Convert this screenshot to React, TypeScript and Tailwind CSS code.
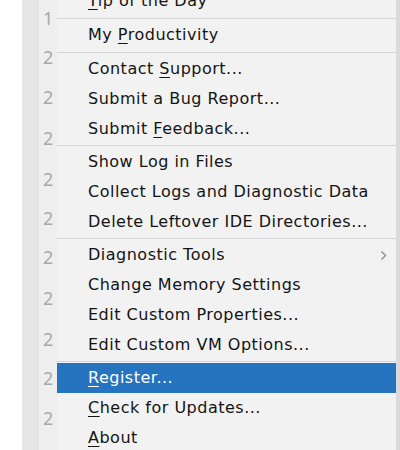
import React from "react";

type Item = { label: string; u?: number; sub?: boolean; active?: boolean; h: number };
type Entry = Item | "sep";

const entries: Entry[] = [
  { label: "Tip of the Day", u: 0, h: 30 },
  "sep",
  { label: "My Productivity", u: 3, h: 30 },
  "sep",
  { label: "Contact Support...", u: 8, h: 30 },
  { label: "Submit a Bug Report...", h: 30 },
  { label: "Submit Feedback...", u: 7, h: 29 },
  "sep",
  { label: "Show Log in Files", h: 30 },
  { label: "Collect Logs and Diagnostic Data", h: 30 },
  { label: "Delete Leftover IDE Directories...", h: 29 },
  "sep",
  { label: "Diagnostic Tools", sub: true, h: 30 },
  { label: "Change Memory Settings", h: 30 },
  { label: "Edit Custom Properties...", h: 30 },
  { label: "Edit Custom VM Options...", h: 29 },
  "sep",
  { label: "Register...", u: 0, active: true, h: 30 },
  { label: "Check for Updates...", u: 0, h: 30 },
  { label: "About", u: 0, h: 30 },
];

const gutter: { n: string; h: number }[] = [
  { n: "1", h: 39 },
  { n: "2", h: 40 },
  { n: "2", h: 40 },
  { n: "2", h: 42 },
  { n: "2", h: 39 },
  { n: "2", h: 39 },
  { n: "2", h: 40 },
  { n: "2", h: 42 },
  { n: "2", h: 39 },
  { n: "2", h: 40 },
  { n: "2", h: 40 },
];

function Label({ item }: { item: Item }) {
  if (item.u === undefined) return <>{item.label}</>;
  const i = item.u;
  return (
    <>
      {item.label.slice(0, i)}
      <span className="underline decoration-1 underline-offset-[3px]">{item.label[i]}</span>
      {item.label.slice(i + 1)}
    </>
  );
}

export default function App() {
  return (
    <div
      className="w-[400px] h-[450px] overflow-hidden flex bg-white"
      style={{ fontFamily: '"DejaVu Sans", "Noto Sans", sans-serif' }}
    >
      <div className="w-[22px] shrink-0 bg-white" />
      <div className="w-[14px] shrink-0 bg-[#e6e6e6]" />
      <div className="w-[21px] shrink-0 bg-[#eeeeee] border-l-[3px] border-[#e3e3e3] overflow-hidden">
        <div className="flex flex-col mt-[-2px]">
          {gutter.map((g, i) => (
            <div
              key={i}
              className="flex items-center pl-[4px] text-[18px] text-[#a9a9a9] leading-none"
              style={{ height: g.h, fontFamily: '"Noto Sans", sans-serif' }}
            >
              {g.n}
            </div>
          ))}
        </div>
      </div>
      <div className="w-[339px] shrink-0 bg-[#f2f2f2] flex flex-col mt-[-14px]">
        {entries.map((e, i) =>
          e === "sep" ? (
            <div key={i} className="h-px mt-[2px] mb-[1px] bg-[#d6d6d6] shrink-0" />
          ) : (
            <div
              key={i}
              className={`shrink-0 flex items-center pl-[31px] pr-[8px] text-[16px] tracking-[0.5px] ${
                e.active ? "bg-[#2673bf] text-white" : "text-[#141414]"
              }`}
              style={{ height: e.h }}
            >
              <span className="flex-1 whitespace-nowrap">
                <Label item={e} />
              </span>
              {e.sub && (
                <svg width="7" height="11" viewBox="0 0 7 11" className="mr-[1px]">
                  <path d="M1.5 1.5 L5.5 5.5 L1.5 9.5" fill="none" stroke="#8a8a8a" strokeWidth="1.3" />
                </svg>
              )}
            </div>
          )
        )}
      </div>
      <div className="flex-1 bg-[#dadadc]" />
    </div>
  );
}
